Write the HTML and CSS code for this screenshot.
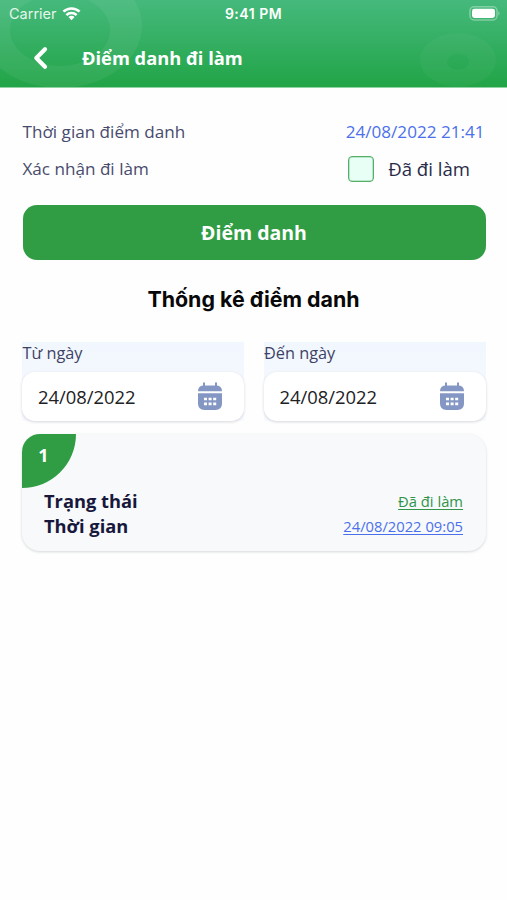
FILE: index.html
```html
<!DOCTYPE html>
<html lang="vi">
<head>
<meta charset="utf-8">
<title>Điểm danh đi làm</title>
<link rel="stylesheet" href="styles.css">
</head>
<body>
<header class="header">
  <svg class="header-art" width="507" height="87" viewBox="0 0 507 87" fill="#fff" fill-rule="evenodd" aria-hidden="true">
    <path fill-opacity=".06" d="M-22 26a82 62 0 0 1 164 0a82 62 0 0 1-164 0zM10 30a50 36 0 0 0 100 0a50 36 0 0 0-100 0z"/>
    <path fill-opacity=".035" d="M420 60a38 27 0 0 1 76 0a38 27 0 0 1-76 0zM447 61.500a11 8 0 0 0 22 0a11 8 0 0 0-22 0z"/>
  </svg>
  <div class="status">
    <div class="carrier"><span>Carrier</span>
      <svg width="19" height="15" viewBox="0 0 20 15" fill="none" stroke="#fff" stroke-width="2.7"><path d="M1.500 5.600a12.200 12.200 0 0 1 17 0M4.600 9.200a7.800 7.800 0 0 1 10.800 0"/><path d="M10 14.500l-3.200-3.200a4.500 4.500 0 0 1 6.400 0z" fill="#fff" stroke="none"/></svg>
    </div>
    <span class="clock">9:41 PM</span>
    <svg class="battery" width="32" height="15" viewBox="0 0 32 15"><rect x="1" y=".8" width="27" height="13.200" rx="4" fill="none" stroke="#fff" stroke-opacity=".35" stroke-width="1.500"/><rect x="3" y="2.800" width="23" height="9.200" rx="2.400" fill="#fff"/><path d="M29.500 5.300q2 2.100 0 4.200z" fill="#fff" fill-opacity=".5"/></svg>
  </div>
  <div class="nav">
    <svg width="16" height="24" viewBox="0 0 16 24" fill="none" stroke="#fff" stroke-width="4.200" stroke-linecap="round" stroke-linejoin="round"><path d="M13 3.200L4.300 12l8.700 8.800"/></svg>
    <h1>Điểm danh đi làm</h1>
  </div>
</header>
<main class="page">
  <div class="row row-time"><span>Thời gian điểm danh</span><span class="now">24/08/2022 21:41</span></div>
  <div class="row row-check"><span>Xác nhận đi làm</span><label class="check"><span class="box"></span><span class="check-text">Đã đi làm</span></label></div>
  <button class="submit">Điểm danh</button>
  <h2>Thống kê điểm danh</h2>
  <div class="filters">
    <div class="field">
      <div class="label">Từ ngày</div>
      <div class="input"><span>24/08/2022</span>
        <svg width="26" height="28" viewBox="0 0 26 28"><path d="M7 .5v5M19 .5v5" stroke="#8497c4" stroke-width="2"/><path d="M1 9.300Q1 3.500 7 3.500h12q6 0 6 5.800z" fill="#8497c4"/><path d="M1 11.200h24v10.300q0 6.500-6.500 6.500h-11Q1 28 1 21.500z" fill="#8497c4"/><path d="M7 17h3M11.600 17h3M16.200 17h3M7 21.800h3M11.600 21.800h3M16.200 21.800h3" stroke="#fff" stroke-width="2.700"/></svg>
      </div>
    </div>
    <div class="field">
      <div class="label">Đến ngày</div>
      <div class="input"><span>24/08/2022</span>
        <svg width="26" height="28" viewBox="0 0 26 28"><path d="M7 .5v5M19 .5v5" stroke="#8497c4" stroke-width="2"/><path d="M1 9.300Q1 3.500 7 3.500h12q6 0 6 5.800z" fill="#8497c4"/><path d="M1 11.200h24v10.300q0 6.500-6.500 6.500h-11Q1 28 1 21.500z" fill="#8497c4"/><path d="M7 17h3M11.600 17h3M16.200 17h3M7 21.800h3M11.600 21.800h3M16.200 21.800h3" stroke="#fff" stroke-width="2.700"/></svg>
      </div>
    </div>
  </div>
  <section class="card">
    <div class="badge">1</div>
    <div class="line"><b>Trạng thái</b><span class="state">Đã đi làm</span></div>
    <div class="line"><b>Thời gian</b><span class="stamp">24/08/2022 09:05</span></div>
  </section>
</main>
</body>
</html>
```
FILE: styles.css
```css
* { box-sizing: border-box; }
body { margin: 0; width: 507px; height: 900px; overflow: hidden; background: #fefefe; font-family: "Open Sans", "Noto Sans", sans-serif; }
h1, h2 { margin: 0; }
svg { display: block; flex: none; }
.header { position: relative; height: 88px; background: linear-gradient(#45b97c, #22a447); color: #fff; border-bottom: 1px solid #8fd3a3; }
.header-art { position: absolute; left: 0; top: 0; }
.status { position: relative; display: grid; grid-template-columns: 1fr auto 1fr; align-items: center; height: 27px; padding: 0 6px 0 9px; font: 14.500px/27px Inter, sans-serif; }
.carrier { display: flex; align-items: center; gap: 5px; color: #e4f5eb; }
.carrier svg { margin-top: -1px; }
.clock { font-weight: 600; font-size: 14px; letter-spacing: .5px; margin-right: 3px; }
.battery { justify-self: end; }
.nav { position: relative; display: flex; align-items: center; height: 62px; padding-left: 32px; gap: 34px; }
.nav h1 { font-size: 18.300px; line-height: 24px; font-weight: 700; }
.page { padding: 31px 22px 0 22px; }
.row { display: flex; align-items: center; justify-content: space-between; padding-left: .5px; color: #484b6c; font-size: 17.100px; line-height: 24px; }
.row-time { height: 26px; }
.row-check { height: 26px; margin-top: 11px; }
.now { color: #4c70eb; margin-right: .5px; }
.check { display: flex; align-items: center; gap: 14px; margin-right: 15px; color: #282b48; font-size: 18.600px; }
.box { width: 26px; height: 26px; border: 1px solid #54b069; border-radius: 4px; background: #e8fff6; box-shadow: inset 0 0 0 .5px #8fcf9d; }
.submit { display: block; width: 463px; height: 55px; margin-top: 23px; margin-left: .5px; padding: 0; border: 0; border-radius: 14px; background: #309d44; color: #fff; font: 700 19.500px/55px "Open Sans", sans-serif; }
h2 { margin-top: 24px; text-align: center; color: #080808; font: 700 21.400px/30px Inter, sans-serif; }
.filters { display: grid; grid-template-columns: 222px 222px; gap: 19.500px; margin-top: 28px; }
.field { background: linear-gradient(#f1f7fe, #f8fafe); }
.label { height: 30px; padding-left: .5px; color: #3e4265; font-size: 16.300px; line-height: 22px; }
.input { display: flex; align-items: center; justify-content: space-between; height: 49px; padding: 0 21px 0 16px; border-radius: 13px; background: #fff; box-shadow: 0 1px 3px rgba(30, 40, 60, .18); color: #202124; font-size: 18.400px; }
.input svg { margin-top: -2px; }
.card { width: 463.500px; height: 117px; margin-top: 13px; border-radius: 18px; overflow: hidden; background: #f7f9fb; box-shadow: 0 1px 3px rgba(30, 50, 50, .18); }
.badge { width: 54px; height: 54px; padding-right: 11px; border-bottom-right-radius: 54px; background: #309d44; color: #fff; font-size: 18px; font-weight: 700; line-height: 42px; text-align: center; }
.line { display: flex; align-items: center; justify-content: space-between; height: 25px; padding: 0 22.500px 0 22px; }
.line b { color: #17183c; font-size: 18.300px; }
.line span { font-size: 14.750px; text-decoration: underline; text-decoration-thickness: 1px; text-underline-offset: 2px; }
.state { color: #329449; }
.stamp { color: #4c70eb; }
```
